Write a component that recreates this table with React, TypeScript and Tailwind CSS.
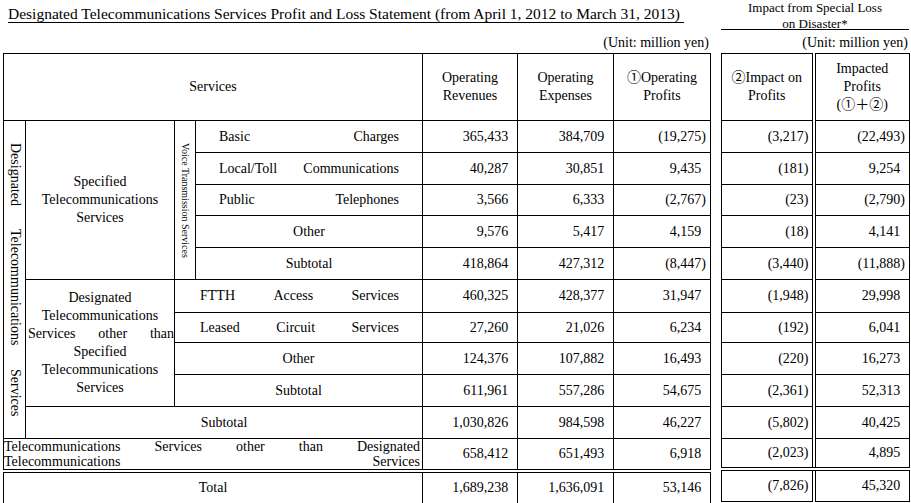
import React from "react";

type Row = { rev: string; exp: string; prof: string; imp: string; after: string; h: string };

const rows: Row[] = [
  { rev: "365,433", exp: "384,709", prof: "(19,275)", imp: "(3,217)", after: "(22,493)", h: "h-[32px]" },
  { rev: "40,287", exp: "30,851", prof: "9,435", imp: "(181)", after: "9,254", h: "h-[32px]" },
  { rev: "3,566", exp: "6,333", prof: "(2,767)", imp: "(23)", after: "(2,790)", h: "h-[31px]" },
  { rev: "9,576", exp: "5,417", prof: "4,159", imp: "(18)", after: "4,141", h: "h-[32px]" },
  { rev: "418,864", exp: "427,312", prof: "(8,447)", imp: "(3,440)", after: "(11,888)", h: "h-[32px]" },
  { rev: "460,325", exp: "428,377", prof: "31,947", imp: "(1,948)", after: "29,998", h: "h-[33px]" },
  { rev: "27,260", exp: "21,026", prof: "6,234", imp: "(192)", after: "6,041", h: "h-[30px]" },
  { rev: "124,376", exp: "107,882", prof: "16,493", imp: "(220)", after: "16,273", h: "h-[32px]" },
  { rev: "611,961", exp: "557,286", prof: "54,675", imp: "(2,361)", after: "52,313", h: "h-[32px]" },
  { rev: "1,030,826", exp: "984,598", prof: "46,227", imp: "(5,802)", after: "40,425", h: "h-[32px]" },
  { rev: "658,412", exp: "651,493", prof: "6,918", imp: "(2,023)", after: "4,895", h: "h-[30px]" },
  { rev: "1,689,238", exp: "1,636,091", prof: "53,146", imp: "(7,826)", after: "45,320", h: "h-[33px]" },
];

// accounting style: positives keep the room of the closing paren
function Num({ v }: { v: string }) {
  const neg = v.startsWith("(");
  return (
    <>
      {v}
      {!neg && <span className="invisible">)</span>}
    </>
  );
}

const cell = "border border-black p-0";
const numCell = "border border-black p-0 pr-[4px] text-right align-middle";
const dbl = " border-b-4 [border-bottom-style:double]";

function Spread({ words, className = "" }: { words: string[]; className?: string }) {
  return (
    <div className={"flex justify-between " + className}>
      {words.map((w, i) => (
        <span key={i}>{w}</span>
      ))}
    </div>
  );
}

function Nums({ r, i }: { r: Row; i: number }) {
  const extra = i === 10 ? dbl : "";
  return (
    <>
      <td className={numCell + extra}><Num v={r.rev} /></td>
      <td className={numCell + extra}><Num v={r.exp} /></td>
      <td className={numCell + extra}><Num v={r.prof} /></td>
    </>
  );
}

export default function App() {
  return (
    <div className="min-h-screen bg-white text-black font-['Liberation_Serif','Noto_Sans_CJK_JP',serif] text-[14px] leading-[18px]">
      <div className="flex pl-[3px]">
        {/* Left - main statement */}
        <div className="w-[707px] flex flex-col">
          <div className="h-[33px] pt-[6px] pl-[5px]">
            <span className="inline-block border-b border-black text-[15.5px] leading-[16px] pr-[4px]">
              Designated Telecommunications Services Profit and Loss Statement (from April 1, 2012 to March 31, 2013)
            </span>
          </div>
          <div className="h-[20px] leading-[20px] text-right pr-[1px]">(Unit: million yen)</div>

          <table className="w-[707px] table-fixed border-collapse">
            <colgroup>
              <col className="w-[22px]" />
              <col className="w-[149px]" />
              <col className="w-[21px]" />
              <col className="w-[227px]" />
              <col className="w-[95px]" />
              <col className="w-[96px]" />
              <col className="w-[97px]" />
            </colgroup>
            <thead>
              <tr className="h-[67px]">
                <th colSpan={4} className={cell + " font-normal text-center"}>Services</th>
                <th className={cell + " font-normal text-center"}>Operating<br />Revenues</th>
                <th className={cell + " font-normal text-center"}>Operating<br />Expenses</th>
                <th className={cell + " font-normal text-center"}>①Operating<br />Profits</th>
              </tr>
            </thead>
            <tbody>
              <tr className={rows[0].h}>
                <td rowSpan={10} className={cell + " align-middle"}>
                  <div className="[writing-mode:vertical-rl] flex justify-between h-[274px] mx-auto leading-[22px]">
                    <span>Designated</span>
                    <span>Telecommunications</span>
                    <span>Services</span>
                  </div>
                </td>
                <td rowSpan={5} className={cell + " text-center align-middle"}>
                  Specified<br />Telecommunications<br />Services
                </td>
                <td rowSpan={5} className={cell + " align-middle"}>
                  <div className="[writing-mode:vertical-rl] text-[10px] leading-[21px] mx-auto">Voice Transmission Services</div>
                </td>
                <td className={cell}><Spread words={["Basic", "Charges"]} className="px-[23px]" /></td>
                <Nums r={rows[0]} i={0} />
              </tr>
              <tr className={rows[1].h}>
                <td className={cell}><Spread words={["Local/Toll", "Communications"]} className="px-[23px]" /></td>
                <Nums r={rows[1]} i={1} />
              </tr>
              <tr className={rows[2].h}>
                <td className={cell}><Spread words={["Public", "Telephones"]} className="px-[23px]" /></td>
                <Nums r={rows[2]} i={2} />
              </tr>
              <tr className={rows[3].h}>
                <td className={cell + " text-center"}>Other</td>
                <Nums r={rows[3]} i={3} />
              </tr>
              <tr className={rows[4].h}>
                <td className={cell + " text-center"}>Subtotal</td>
                <Nums r={rows[4]} i={4} />
              </tr>

              <tr className={rows[5].h}>
                <td rowSpan={4} className={cell + " text-center align-middle"}>
                  <div>Designated</div>
                  <div>Telecommunications</div>
                  <Spread words={["Services", "other", "than"]} className="pl-[2px]" />
                  <div>Specified</div>
                  <div>Telecommunications</div>
                  <div>Services</div>
                </td>
                <td colSpan={2} className={cell}><Spread words={["FTTH", "Access", "Services"]} className="pl-[25px] pr-[23px]" /></td>
                <Nums r={rows[5]} i={5} />
              </tr>
              <tr className={rows[6].h}>
                <td colSpan={2} className={cell}><Spread words={["Leased", "Circuit", "Services"]} className="pl-[25px] pr-[23px]" /></td>
                <Nums r={rows[6]} i={6} />
              </tr>
              <tr className={rows[7].h}>
                <td colSpan={2} className={cell + " text-center"}>Other</td>
                <Nums r={rows[7]} i={7} />
              </tr>
              <tr className={rows[8].h}>
                <td colSpan={2} className={cell + " text-center"}>Subtotal</td>
                <Nums r={rows[8]} i={8} />
              </tr>

              <tr className={rows[9].h}>
                <td colSpan={3} className={cell + " text-center"}>Subtotal</td>
                <Nums r={rows[9]} i={9} />
              </tr>
              <tr className={rows[10].h}>
                <td colSpan={4} className={cell + " align-top leading-[15px]" + dbl}>
                  <Spread words={["Telecommunications", "Services", "other", "than", "Designated"]} className="pr-[2px]" />
                  <Spread words={["Telecommunications", "Services"]} className="pr-[2px]" />
                </td>
                <Nums r={rows[10]} i={10} />
              </tr>
              <tr className={rows[11].h}>
                <td colSpan={4} className={cell + " text-center"}>Total</td>
                <Nums r={rows[11]} i={11} />
              </tr>
            </tbody>
          </table>
        </div>

        {/* Right - disaster impact */}
        <div className="w-[188px] ml-[11px] flex flex-col">
          <div className="h-[30px] border-b border-black text-center text-[13px] leading-[16px]">
            Impact from Special Loss<br />on Disaster*
          </div>
          <div className="h-[23px] pt-[3px] leading-[20px] text-right pr-[1px]">(Unit: million yen)</div>

          <table className="w-[188px] table-fixed border-collapse">
            <colgroup>
              <col className="w-[92px]" />
              <col className="w-[96px]" />
            </colgroup>
            <thead>
              <tr className="h-[67px]">
                <th className={cell + " font-normal text-center"}>②Impact on<br />Profits</th>
                <th className={cell + " font-normal text-center border-l-4 [border-left-style:double]"}>
                  Impacted<br />Profits<br />(①＋②)
                </th>
              </tr>
            </thead>
            <tbody>
              {rows.map((r, i) => (
                <tr key={i} className={r.h}>
                  <td className={"border border-black p-0 pr-[3px] text-right align-middle" + (i === 10 ? dbl : "")}>
                    <Num v={r.imp} />
                  </td>
                  <td className={numCell + " border-l-4 [border-left-style:double]" + (i === 10 ? dbl : "")}>
                    <Num v={r.after} />
                  </td>
                </tr>
              ))}
            </tbody>
          </table>
        </div>
      </div>
    </div>
  );
}
